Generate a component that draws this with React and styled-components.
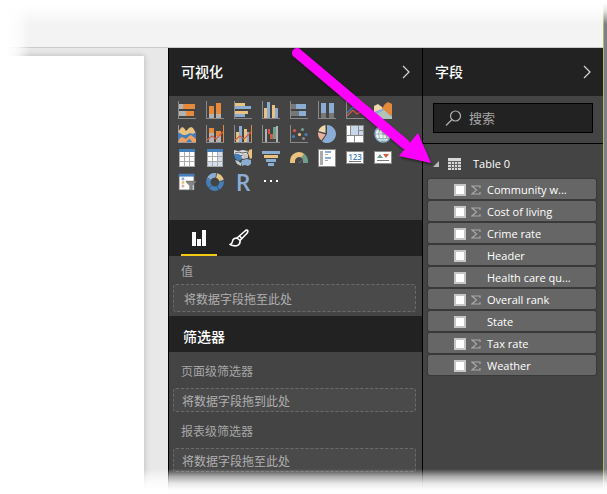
import React from "react";
import styled, { createGlobalStyle } from "styled-components";

const latin = '"Open Sans", "Noto Sans CJK SC", sans-serif';
const cjk = '"Noto Sans CJK SC", "Open Sans", sans-serif';

const Global = createGlobalStyle`
  *, *::before, *::after { box-sizing: border-box; }
  body { margin: 0; background: #fff; font-family: ${cjk}; font-size: 12px; }
  button { padding: 0; border: 0; background: none; color: inherit; cursor: pointer; }
  h2, ul { margin: 0; padding: 0; }
  svg { display: block; }
`;

const Screen = styled.div`
  position: relative;
  display: flex;
  height: 100vh;
  overflow: hidden;
`;

const Workspace = styled.div`
  flex: 1;
  min-width: 0;
  display: flex;
  flex-direction: column;
`;

const Ribbon = styled.header`
  flex: 0 0 48px;
  background: #f3f3f3;
  border-bottom: 1px solid #c9cdc9;
`;

const Body = styled.div`
  flex: 1;
  min-height: 0;
  display: flex;
`;

const Edge = styled.div`
  flex: 0 0 4px;
  background: #7f7f7f;
  border-left: 1px solid #b5b768;
`;

const Canvas = styled.main`
  flex: 1;
  min-width: 0;
  display: flex;
  padding: 8px 24px 0 0;
  background: #e8e8e8;
`;

const Page = styled.div`
  flex: 1;
  background: #fff;
  box-shadow: 0 0 6px rgba(0, 0, 0, 0.22);
`;

const Panels = styled.div`
  position: relative;
  display: flex;
  background: #444;
`;

const Panel = styled.section`
  width: ${(p) => p.$width}px;
  border-left: 1px solid #000;
`;

const PanelHeader = styled.header`
  display: flex;
  align-items: center;
  justify-content: space-between;
  height: ${(p) => (p.$compact ? 36 : 48)}px;
  padding: ${(p) => (p.$compact ? "6px 12px 0 14px" : "0 12px")};
  background: #222;
`;

const Title = styled.h2`
  padding-bottom: 2px;
  font: 500 14px/20px ${cjk};
  color: #fff;
`;

const VisualGrid = styled.div`
  display: grid;
  grid-template-columns: repeat(8, 18px);
  grid-auto-rows: 18px;
  gap: 6px 10px;
  height: 124px;
  padding: 5px 9px;
`;

const IconButton = styled.button`
  display: flex;
  align-items: center;
  justify-content: center;
`;

const ScriptLetter = styled.span`
  font: 600 23px/18px ${latin};
  color: #8badd3;
`;

const Tabs = styled.div`
  display: flex;
  height: 36px;
  padding: 0 12px;
  gap: 4px;
  background: #222;
`;

const Tab = styled.button`
  display: flex;
  align-items: center;
  justify-content: center;
  width: 36px;
  padding-top: 2px;
  border-bottom: 2px solid ${(p) => (p.$active ? "#f2c811" : "transparent")};
`;

const Well = styled.div`
  display: flex;
  flex-direction: column;
  padding: ${(p) => (p.$roomy ? "10px 6px 0 4px" : "6px 6px 4px 4px")};
`;

const WellLabel = styled.div`
  padding-left: 8px;
  margin-bottom: ${(p) => (p.$roomy ? 8 : 4)}px;
  font-size: 12px;
  line-height: 18px;
  color: #a6a6a6;
`;

const DropZone = styled.div`
  display: flex;
  align-items: center;
  height: ${(p) => (p.$roomy ? 24 : 28)}px;
  padding-left: ${(p) => (p.$roomy ? 8 : 10)}px;
  border: 1px dashed #6b6b6b;
  border-radius: 3px;
  background: #4a4a4a;
  color: #b0b0b0;
`;

const SearchArea = styled.div`
  padding: 7px 10px 10px;
  border-bottom: 1px solid #000;
`;

const SearchBox = styled.label`
  display: flex;
  align-items: center;
  gap: 7px;
  height: 30px;
  padding: 0 11px;
  border: 1px solid #000;
  background: #222;
`;

const SearchInput = styled.input`
  flex: 1;
  min-width: 0;
  padding: 0;
  border: 0;
  outline: 0;
  background: none;
  font: 13px/20px ${cjk};
  color: #ddd;
  &::placeholder { color: #a6a6a6; opacity: 1; }
`;

const TableRow = styled.button`
  display: flex;
  align-items: center;
  width: 100%;
  height: 35px;
  padding: 4px 0 0 10px;
  font: 11px/16px ${latin};
  color: #fff;
`;

const TableName = styled.span`
  padding-left: 12px;
`;

const FieldList = styled.ul`
  display: flex;
  flex-direction: column;
  gap: 2px;
  padding: 0 7px 0 5px;
  list-style: none;
`;

const Field = styled.label`
  display: grid;
  grid-template-columns: 12px 10px 1fr;
  align-items: center;
  height: 20px;
  padding: 2px 0 0 26px;
  border-radius: 2px;
  background: #666;
  box-shadow: 0 0 0 1px #393939;
  column-gap: 5px;
  font: 11px/16px ${latin};
  color: #fff;
`;

const Check = styled.input`
  appearance: none;
  width: 12px;
  height: 12px;
  margin: 0;
  border: 2px solid #c6c6c6;
  background: #fff;
  &:checked { background: #f2c811; }
`;

const FieldName = styled.span`
  padding-left: 1px;
  white-space: nowrap;
`;

const Pointer = styled.svg`
  position: absolute;
  top: -2px;
  left: 120px;
  overflow: visible;
  pointer-events: none;
  filter: drop-shadow(1px 2px 1px rgba(0, 0, 0, 0.4));
`;

const Fade = styled.div`
  position: absolute;
  pointer-events: none;
`;

const TopFade = styled(Fade)`
  inset: 0 0 auto 0;
  height: 24px;
  background: linear-gradient(#fff 12%, rgba(255, 255, 255, 0.8) 45%, transparent);
`;

const LeftFade = styled(Fade)`
  inset: 0 auto 0 0;
  width: 30px;
  background: linear-gradient(to right, #fff 20%, rgba(255, 255, 255, 0.75) 60%, transparent);
`;

const BottomFade = styled(Fade)`
  inset: auto 0 0 0;
  height: 25px;
  background: linear-gradient(transparent, rgba(255, 255, 255, 0.55) 30%, rgba(255, 255, 255, 0.88) 58%, #fff 84%);
`;

const C = { gray: "#777", lt: "#b3b3b3", or: "#e58a3c", ye: "#e8c27e", bl: "#8badd3", db: "#447fba", red: "#d75b42", pk: "#e9ae9c", gr: "#6fa08b" };

const Bars = ({ items }) =>
  items.map(([x, y, w, h, c], i) => <rect key={i} x={x} y={y} width={w} height={h} fill={C[c] || c} />);

const Axis = () => <path d="M0 0h1v17h17v1H0z" fill="#8a8a8a" />;

const Glyph = ({ children }) => (
  <svg width="18" height="18" viewBox="0 0 18 18" fill="none" aria-hidden="true">{children}</svg>
);

const Chart = ({ items, children }) => (
  <Glyph><Bars items={items} />{children}<Axis /></Glyph>
);

const GridGlyph = ({ tinted }) => (
  <Glyph>
    <rect x="1" y="0" width="16" height="18" fill="#aaa" />
    <rect x="1" y="0" width="16" height="3" fill={C.db} />
    {[0, 1, 2].flatMap((r) =>
      [0, 1, 2].map((c) => (
        <rect key={`${r}${c}`} x={2 + c * 5} y={3 + r * 5} width="4" height="4"
          fill={tinted && (c === 2 || r === 2) ? "#d3deea" : "#fff"} />
      ))
    )}
  </Glyph>
);

const visuals = [
  ["堆积条形图", <Chart items={[[1, 3, 4, 5, "lt"], [5, 3, 12, 5, "or"], [1, 10, 7, 5, "lt"], [8, 10, 8, 5, "or"]]} />],
  ["堆积柱形图", <Chart items={[[3, 5, 5, 8, "or"], [3, 13, 5, 4, "lt"], [10, 2, 5, 11, "or"], [10, 13, 5, 4, "lt"]]} />],
  ["簇状条形图", <Chart items={[[1, 2, 10, 3, "ye"], [1, 5, 16, 3, "bl"], [1, 10, 13, 3, "ye"], [1, 13, 10, 3, "bl"]]} />],
  ["簇状柱形图", <Chart items={[[2, 7, 3, 10, "ye"], [5, 1, 3, 16, "bl"], [10, 4, 3, 13, "ye"], [13, 7, 3, 10, "bl"]]} />],
  ["百分比堆积条形图", <Chart items={[[1, 3, 5, 5, "gray"], [6, 3, 10, 5, "bl"], [1, 10, 8, 5, "gray"], [9, 10, 7, 5, "bl"]]} />],
  ["百分比堆积柱形图", <Chart items={[[3, 2, 5, 10, "bl"], [3, 12, 5, 5, "gray"], [11, 2, 5, 10, "bl"], [11, 12, 5, 5, "gray"]]} />],
  ["折线图", <Chart items={[]}><path d="M1 12 7 6l4 3 6-6" stroke={C.db} strokeWidth="1.3" /><path d="m1 15 6-6 4 4 6-4" stroke={C.red} strokeWidth="1.2" /></Chart>],
  ["分区图", <Glyph><path d="M0 5 4 3l4 3 3 4v7H0z" fill="#f1d9ad" /><path d="m7 9 4-6 3-2 4 2v12l-7-2z" fill={C.or} /><path d="m0 11 5-2 4-1 4 4 5 3v3H0z" fill={C.bl} /><path d="m0 14 5-2 5-3 4 4 4 3v2H0z" fill="#b4c3b8" /></Glyph>],
  ["堆积面积图", <Glyph><path d="M0 0h1v17h17v1H0z" fill="#999" /><path d="M0 7 3 3l1-1 2 1 2 3 3-3 2-1 2 1 3 5v6H0z" fill={C.ye} /><path d="m0 7 5 3h3l4-2 3 1 3-2v10H0z" fill={C.db} /><path d="m0 17 2-4 2-1 4 2 3-3 2-1 5 4v3z" fill="#efa05e" /><path d="m8 17 3-3 2 1 1 2z" fill={C.db} /></Glyph>],
  ["折线和堆积柱形图", <Chart items={[[3, 3, 5, 5, "or"], [3, 8, 5, 9, "lt"], [10, 6, 5, 5, "or"], [10, 11, 5, 6, "lt"], [17, 0, 1, 17, "or"]]}><path d="m1 15 5-4 4 3 7-7" stroke={C.red} strokeWidth="1.2" /></Chart>],
  ["折线和簇状柱形图", <Chart items={[[2, 7, 3, 10, "ye"], [5, 1, 3, 16, "bl"], [10, 4, 3, 13, "ye"], [13, 7, 2, 10, "bl"], [17, 0, 1, 17, "or"]]}><path d="m1 15 5-4 4 3 7-7" stroke={C.red} strokeWidth="1.2" /></Chart>],
  ["瀑布图", <Chart items={[[3, 4, 2, 13, "lt"], [6, 4, 2, 5, "red"], [8, 9, 3, 5, "red"], [11, 2, 3, 12, "gr"], [14, 1, 2, 16, "lt"]]} />],
  ["散点图", <Glyph><Axis /><g><circle cx="4.5" cy="5.5" r="1.6" fill={C.red} /><circle cx="12.5" cy="4.5" r="1.6" fill={C.gr} /><circle cx="3.5" cy="11.5" r="1.6" fill={C.db} /><circle cx="9.5" cy="9.5" r="1.6" fill={C.ye} /><circle cx="16" cy="9.5" r="1.6" fill={C.db} /><circle cx="13.5" cy="13.5" r="1.5" fill="#8a8a8a" /></g></Glyph>],
  ["饼图", <Glyph><path d="M9 9V0a9 9 0 1 1-5 16.5z" fill={C.bl} /><path d="M7.5 8V0A9 9 0 0 0 .3 6z" fill="#f0d9ad" /><path d="M7.6 9.4.1 7.2A9 9 0 0 0 3.4 15.6z" fill={C.pk} /></Glyph>],
  ["树状图", <Glyph><Bars items={[[0, 0, 18, 18, "#8a8a8a"], [1, 1, 3, 5, "#fff"], [5, 1, 7, 9, "#c8d7e9"], [13, 1, 4, 4, "#c8d7e9"], [1, 6, 3, 4, "#fff"], [13, 6, 4, 4, "#c8d7e9"], [1, 11, 7, 6, "#fff"], [9, 11, 8, 6, "#fff"]]} /></Glyph>],
  ["地图", <Glyph><circle cx="9" cy="9" r="8" fill="#f2f5f5" stroke={C.bl} strokeWidth="1.5" /><path d="M9 1v16M1 9h16M3 4.5h12M3 13.5h12M9 1q-9 8 0 16M9 1q9 8 0 16" stroke="#7fb0a8" strokeWidth=".8" /></Glyph>],
  ["表", <GridGlyph />],
  ["矩阵", <GridGlyph tinted />],
  ["着色地图", <Glyph><path d="m0 1 4 1 5-1 5 1-1 3-4 1 1 3-3 1H3L1 7 0 4z" fill="#dcdcdc" /><path d="m1 4 4-1 3 1 6-1M4 7l7-1" stroke="#666" /><path d="m15 1 3-1v9l-2 1-1-3-1-3z" fill={C.ye} /><path d="M0 5h5l3 3-1 3-3 1-3-3z" fill={C.db} /><path d="m8 11 5-1 4 1v4l-3 2-3-1-3 1-1-3z" fill={C.bl} /><path d="m1 11 3 1 3 2v3l-4-2zM8 5h6v4l-5 1z" fill="#c5c5c5" /></Glyph>],
  ["漏斗图", <Glyph><Bars items={[[0, 2, 18, 3, "bl"], [2, 6, 14, 3, "ye"], [4, 10, 10, 3, "bl"], [6, 14, 6, 3, "bl"]]} /></Glyph>],
  ["仪表", <Glyph><path d="M2.5 14V12A6.5 6.5 0 0 1 13 6.9" stroke={C.ye} strokeWidth="5" /><path d="M12.7 6.8a6.5 6.5 0 0 1 2.8 5V14" stroke={C.gr} strokeWidth="5" /><path d="m8 14 6-5-4 5z" fill="#666" /></Glyph>],
  ["多行卡", <Glyph><Bars items={[[0, 0, 18, 18, "#8a8a8a"], [1, 1, 16, 16, "#fff"], [2, 2, 3, 14, "#aaa"], [7, 2, 6, 2, "bl"], [7, 5, 3, 1, "#aaa"], [7, 8, 6, 2, "bl"], [7, 11, 3, 1, "#aaa"]]} /></Glyph>],
  ["卡片图", <Glyph><Bars items={[[0, 2, 18, 13, "#8a8a8a"], [1, 3, 16, 11, "#fff"], [3, 12, 12, 1, "#777"]]} /><text x="9" y="10.5" textAnchor="middle" fontFamily="Open Sans" fontWeight="600" fontSize="8" fill={C.db}>123</text></Glyph>],
  ["KPI", <Glyph><Bars items={[[0, 2, 18, 13, "#8a8a8a"], [1, 3, 16, 11, "#fff"], [3, 11, 12, 1, "#777"]]} /><path d="m3 9 3-4 3 4z" fill={C.gr} /><path d="M9 5h6l-3 4z" fill={C.red} /></Glyph>],
  ["切片器", <svg width="20" height="18" viewBox="-1 0 20 18" aria-hidden="true"><Bars items={[[0, 0, 17, 18, "#aaa"], [1, 1, 15, 16, "#fff"], [0, 0, 17, 3, "db"], [3, 4, 3, 3, "bl"], [3, 8, 3, 3, "ye"], [3, 12, 3, 3, "pk"]]} /><path d="M8 8h11v1l-4 4v4l-3 1v-5L8 9z" fill="#858585" stroke="#555" strokeWidth=".5" /></svg>],
  ["圆环图", <Glyph><g transform="rotate(-90 9 9)" strokeWidth="4.5"><circle cx="9" cy="9" r="6.7" stroke={C.db} /><circle cx="9" cy="9" r="6.7" stroke={C.ye} pathLength="100" strokeDasharray="17 83" strokeDashoffset="-4" /><circle cx="9" cy="9" r="6.7" stroke={C.bl} pathLength="100" strokeDasharray="22 78" strokeDashoffset="-81" /><circle cx="9" cy="9" r="6.7" stroke="#444" pathLength="100" strokeDasharray="1.5 18.5" strokeDashoffset="-2" /></g></Glyph>],
  ["R 脚本", <ScriptLetter>R</ScriptLetter>],
  ["更多", <Glyph><Bars items={[[2, 7, 2, 2, "#fff"], [8, 7, 2, 2, "#fff"], [14, 7, 2, 2, "#fff"]]} /></Glyph>],
];

const fields = [
  ["Community w...", true], ["Cost of living", true], ["Crime rate", true],
  ["Header", false], ["Health care qu...", false], ["Overall rank", true],
  ["State", false], ["Tax rate", true], ["Weather", true],
];

const Chevron = () => (
  <svg width="8" height="14" viewBox="0 0 8 14" fill="none" stroke="#d0d0d0" strokeWidth="1.3" aria-hidden="true">
    <path d="m1 1 6 6-6 6" />
  </svg>
);

const Sigma = () => (
  <svg width="10" height="10" viewBox="0 0 10 10" fill="none" stroke="#a8a8a8" strokeWidth="1.2" aria-hidden="true">
    <path d="M9 3V1H1l4.5 4L1 9h8V7" />
  </svg>
);

const BarsIcon = () => (
  <svg width="16" height="16" viewBox="0 0 16 16" fill="#fff" aria-hidden="true">
    <path d="M1 2h4v14H1zM6 9h4v7H6zM11 0h4v16h-4z" />
  </svg>
);

const BrushIcon = () => (
  <svg width="20" height="18" viewBox="0 0 20 18" fill="none" stroke="#fff" strokeWidth="1.6" strokeLinejoin="round" aria-hidden="true">
    <path d="m8 9 8-7q2-1.5 2.7-.5.5 1-.7 2.700l-7 7.300" />
    <path d="M8 9Q4 9 3.500 12.500q-.3 2-2.500 3 4 2 7.500 1 3-1.500 2.500-5zM10.500 7l2.500 2.700" />
  </svg>
);

const SearchIcon = () => (
  <svg width="17" height="16" viewBox="0 0 17 16" fill="none" stroke="#b0b0b0" strokeWidth="1.2" aria-hidden="true">
    <circle cx="10.5" cy="6" r="5" /><path d="m7 9.500-6 6" />
  </svg>
);

const Triangle = () => (
  <svg width="6" height="6" viewBox="0 0 6 6" aria-hidden="true"><path d="M6 0v6H0z" fill="#bbb" /></svg>
);

const TableIcon = () => (
  <svg width="22" height="12" viewBox="0 0 22 12" aria-hidden="true">
    <rect x="9" width="13" height="12" fill="#d8d8d8" />
    <path d="M9 3.500h13M9 6.500h13M9 9.500h13M12.500 3v9M15.500 3v9M18.500 3v9" stroke="#666" />
  </svg>
);

export default function App() {
  return (
    <>
      <Global />
      <Screen>
        <Workspace>
          <Ribbon />
          <Body>
            <Canvas><Page /></Canvas>
            <Panels>
              <Panel $width={254}>
                <PanelHeader>
                  <Title>可视化</Title>
                  <IconButton aria-label="折叠可视化"><Chevron /></IconButton>
                </PanelHeader>
                <VisualGrid>
                  {visuals.map(([name, icon]) => (
                    <IconButton key={name} aria-label={name}>{icon}</IconButton>
                  ))}
                </VisualGrid>
                <Tabs role="tablist">
                  <Tab $active role="tab" aria-selected="true" aria-label="字段"><BarsIcon /></Tab>
                  <Tab role="tab" aria-selected="false" aria-label="格式"><BrushIcon /></Tab>
                </Tabs>
                <Well>
                  <WellLabel>值</WellLabel>
                  <DropZone>将数据字段拖至此处</DropZone>
                </Well>
                <PanelHeader $compact><Title>筛选器</Title></PanelHeader>
                <Well $roomy>
                  <WellLabel $roomy>页面级筛选器</WellLabel>
                  <DropZone $roomy>将数据字段拖到此处</DropZone>
                </Well>
                <Well $roomy>
                  <WellLabel $roomy>报表级筛选器</WellLabel>
                  <DropZone $roomy>将数据字段拖至此处</DropZone>
                </Well>
              </Panel>
              <Panel $width={181}>
                <PanelHeader>
                  <Title>字段</Title>
                  <IconButton aria-label="折叠字段"><Chevron /></IconButton>
                </PanelHeader>
                <SearchArea>
                  <SearchBox>
                    <SearchIcon />
                    <SearchInput type="text" placeholder="搜索" aria-label="搜索" />
                  </SearchBox>
                </SearchArea>
                <TableRow aria-expanded="true">
                  <Triangle /><TableIcon /><TableName>Table 0</TableName>
                </TableRow>
                <FieldList>
                  {fields.map(([name, numeric]) => (
                    <li key={name}>
                      <Field>
                        <Check type="checkbox" />
                        {numeric ? <Sigma /> : <span />}
                        <FieldName>{name}</FieldName>
                      </Field>
                    </li>
                  ))}
                </FieldList>
              </Panel>
              <Pointer width="150" height="125" viewBox="0 0 150 125" aria-hidden="true">
                <path d="m9 7 108 91" stroke="#f0f" strokeWidth="10" strokeLinecap="round" />
                <path d="m143 117-32-7 19-23z" fill="#f0f" />
              </Pointer>
            </Panels>
          </Body>
        </Workspace>
        <Edge />
        <TopFade />
        <LeftFade />
        <BottomFade />
      </Screen>
    </>
  );
}
